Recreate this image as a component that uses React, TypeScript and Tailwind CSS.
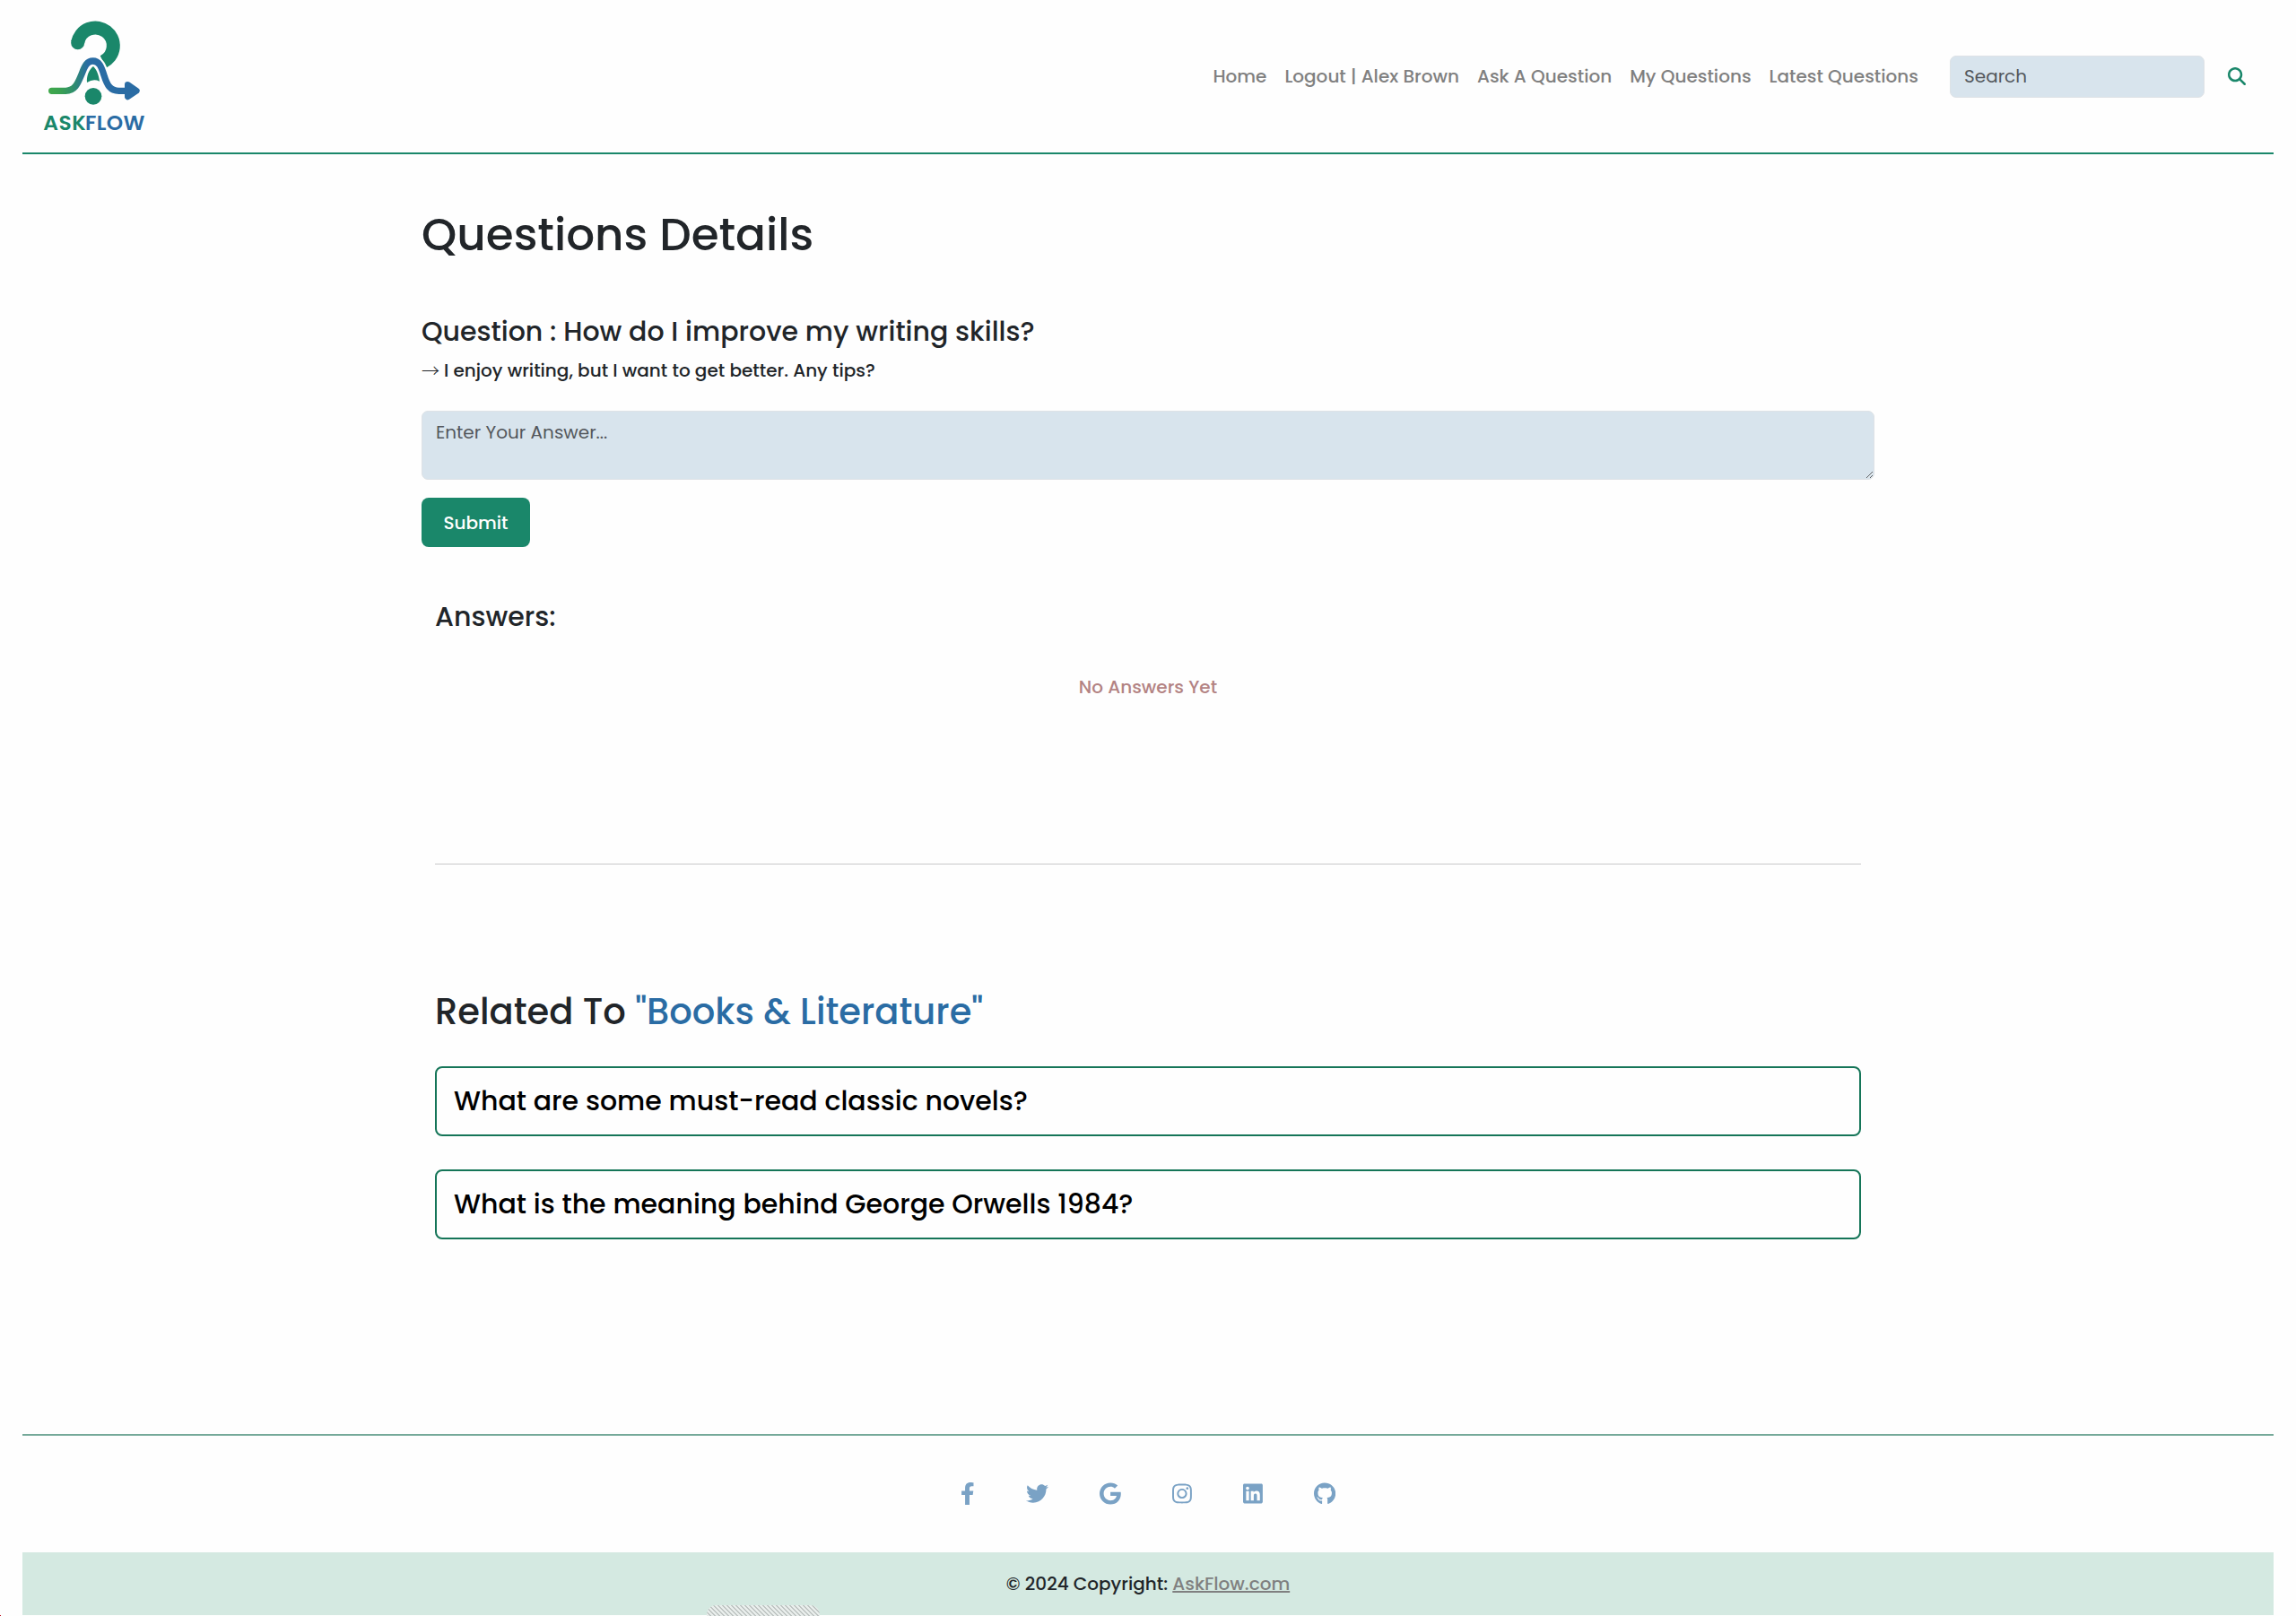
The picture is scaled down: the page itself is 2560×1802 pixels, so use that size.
import { FaFacebookF, FaTwitter, FaGoogle, FaInstagram, FaLinkedin, FaGithub } from "react-icons/fa";
import { FaMagnifyingGlass } from "react-icons/fa6";

function Logo() {
  return (
    <svg width="120" height="160" viewBox="120 0 360 480" className="block overflow-visible">
      <defs>
        <linearGradient id="flow" gradientUnits="userSpaceOnUse" x1="165" y1="0" x2="465" y2="0">
          <stop offset="0" stopColor="#40a84c" />
          <stop offset="0.12" stopColor="#3aa152" />
          <stop offset="0.27" stopColor="#2f8e6c" />
          <stop offset="0.43" stopColor="#2a6ca4" />
          <stop offset="1" stopColor="#2a6ca4" />
        </linearGradient>
      </defs>
      <path d="M260 142 A60 60 0 1 1 345 207" fill="none" stroke="#1a876a" strokeWidth="45" />
      <circle cx="260" cy="143" r="22.5" fill="#1a876a" />
      <path
        d="M173 304 H220 C253 304 262 274 274 246 C284 219 292 204 311 204 C331 204 339 222 348 252 C358 284 368 304 398 304 H440"
        fill="none"
        stroke="#fefefe"
        strokeWidth="35"
      />
      <path d="M291 276 C289 254 297 234 312 222 C325 235 331 254 333 272 Q312 262 291 276Z" fill="#1a876a" />
      <circle cx="312" cy="322" r="28" fill="#1a876a" />
      <path
        d="M173 304 H220 C253 304 262 274 274 246 C284 219 292 204 311 204 C331 204 339 222 348 252 C358 284 368 304 398 304 H440"
        fill="none"
        stroke="url(#flow)"
        strokeWidth="22"
        strokeLinecap="round"
      />
      <path d="M427 283 L457 304 L427 324Z" fill="#2a6ca4" stroke="#2a6ca4" strokeWidth="20" strokeLinejoin="round" />
      <text x="145" y="435" fontSize="70" fontWeight="600" textLength="142" fill="#1a876a">ASK</text>
      <text x="285" y="435" fontSize="70" fontWeight="600" textLength="199" fill="#2a6ca4">FLOW</text>
    </svg>
  );
}

function RelatedQuestion({ children }: { children: string }) {
  return (
    <a className="flex h-[78px] items-center rounded-[8px] border-2 border-[#157558] px-[19px] text-[30px] leading-9 text-black">
      {children}
    </a>
  );
}

export default function App() {
  return (
    <div className="relative flex h-[1802px] w-[2560px] flex-col overflow-hidden bg-[#fefefe] px-[25px] font-['Poppins','Inter',sans-serif] text-[20px] leading-[30px] font-medium text-[#212529]">
      <header className="flex h-[172px] shrink-0 items-center border-b-2 border-[#1a876a]">
        <div className="h-full pl-[15px]">
          <Logo />
        </div>
        <nav className="mr-[35px] ml-auto flex gap-5 whitespace-nowrap text-[#808080]">
          <a>Home</a>
          <a>Logout | Alex Brown</a>
          <a>Ask A Question</a>
          <a>My Questions</a>
          <a>Latest Questions</a>
        </nav>
        <input
          placeholder="Search"
          className="mt-px h-[47px] w-[284px] rounded-[7px] border border-[#dee2e6] bg-[#d8e4ed] px-[15px] pb-px font-normal placeholder:text-[#53575c]"
        />
        <FaMagnifyingGlass className="mr-[31px] ml-[26px] size-5 text-[#1a876a]" />
      </header>

      <main className="mx-auto w-[1620px] shrink-0">
        <h1 className="mt-[60px] text-[50px] leading-[60px]">Questions Details</h1>
        <h4 className="mt-[60px] text-[30px] leading-9">Question : How do I improve my writing skills?</h4>
        <p className="mt-2.5 flex h-[30px]">
          <span className="w-[25px] font-['Noto_Sans_CJK_JP',sans-serif] font-light">→</span>
          <span>I enjoy writing, but I want to get better. Any tips?</span>
        </p>
        <textarea
          placeholder="Enter Your Answer..."
          className="mt-[30px] block h-[77px] w-full rounded-[7px] border border-[#dee2e6] bg-[#d8e4ed] px-[15px] py-2 font-normal placeholder:text-[#53575c]"
        />
        <button className="mt-5 block h-[55px] w-[121px] rounded-[8px] bg-[#1a876a] font-medium text-white">Submit</button>

        <section className="px-[15px]">
          <h4 className="mt-[60px] text-[30px] leading-9">Answers:</h4>
          <p className="mt-[45px] text-center text-[#b38383]">No Answers Yet</p>
          <hr className="mt-[182px] border-t border-[#c7c8c9]" />

          <h2 className="mt-[140px] text-[40px] leading-[48px]">
            Related To <span className="text-[#2a6ca4]">"Books &amp; Literature"</span>
          </h2>
          <div className="mt-[37px] flex flex-col gap-[37px]">
            <RelatedQuestion>What are some must-read classic novels?</RelatedQuestion>
            <RelatedQuestion>What is the meaning behind George Orwells 1984?</RelatedQuestion>
          </div>
        </section>
      </main>

      <footer className="mt-[217px] shrink-0 border-t-2 border-[#75a999]">
        <div className="flex h-[130px] items-center justify-center gap-[57.2px] pb-[2px] text-[25px] text-[#7aa2c5]">
          <FaFacebookF className="w-[15.6px]" />
          <FaTwitter className="w-[25px]" />
          <FaGoogle className="w-[23.8px]" />
          <FaInstagram className="w-[21.9px]" />
          <FaLinkedin className="w-[21.9px]" />
          <FaGithub className="w-[24.2px]" />
        </div>
        <div className="h-[70px] bg-[#d4e9e1] pt-5 text-center">
          © 2024 Copyright: <a className="text-[#808080] underline">AskFlow.com</a>
        </div>
      </footer>

      <div className="absolute top-[1790px] left-[788px] h-3 w-[126px] rounded-t-[10px] bg-[repeating-linear-gradient(45deg,#e9eeec_0px,#e9eeec_2.4px,#bfc5c3_2.4px,#bfc5c3_3.54px)]" />
      <div className="absolute top-[1801px] left-0 size-px bg-[#c01020]" />
    </div>
  );
}
